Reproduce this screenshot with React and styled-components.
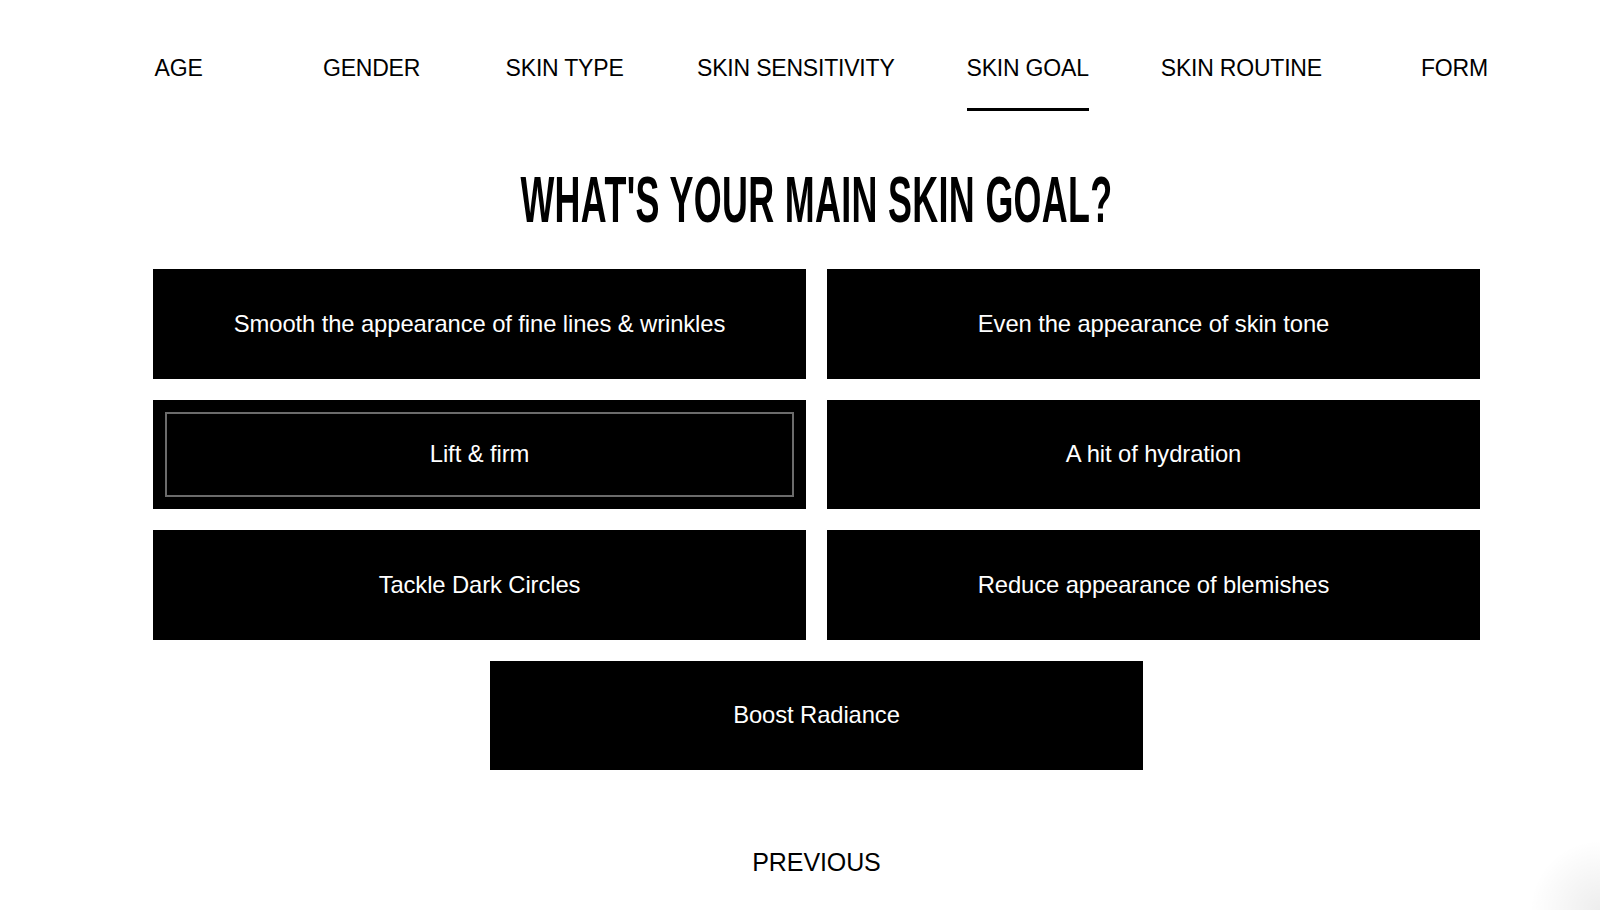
import React from "react";
import styled, { createGlobalStyle } from "styled-components";

const GlobalStyle = createGlobalStyle`
  * { box-sizing: border-box; }
  html, body {
    margin: 0;
    padding: 0;
    background: #fff;
    color: #000;
    font-family: "Liberation Sans", Arial, sans-serif;
  }
  body {
    min-height: 910px;
    background:
      radial-gradient(circle at 100% 100%, rgba(0,0,0,0.07), rgba(0,0,0,0) 70px),
      #fff;
    background-repeat: no-repeat;
  }
`;

const Page = styled.div`
  padding-left: 33px;
  padding-top: 56px;
  min-height: 910px;
`;

const Nav = styled.nav`
  display: flex;
  justify-content: center;
`;

const Tab = styled.div`
  min-width: 193px;
  padding: 0 36px;
  display: flex;
  justify-content: center;
`;

const TabLabel = styled.span`
  display: block;
  font-size: 23px;
  line-height: 24px;
  letter-spacing: -0.2px;
  padding-bottom: 28px;
  border-bottom: 3px solid ${(p) => (p.$active ? "#000" : "transparent")};
  white-space: nowrap;
  cursor: pointer;
`;

const Main = styled.main`
  width: 1327px;
  margin: 0 auto;
`;

const Heading = styled.h1`
  margin: 56px 0 36px;
  font-family: "Liberation Sans", Arial, sans-serif;
  font-weight: 700;
  font-size: 65px;
  line-height: 66px;
  text-align: center;
  letter-spacing: 0.6px;
  transform: scaleX(0.552);
  white-space: nowrap;
`;

const Grid = styled.div`
  display: grid;
  grid-template-columns: 1fr 1fr;
  column-gap: 21px;
  row-gap: 21px;
`;

const Option = styled.button`
  height: 109.5px;
  background: #000;
  color: #fff;
  border: none;
  font-family: "Liberation Sans", Arial, sans-serif;
  font-size: 23.8px;
  letter-spacing: -0.1px;
  display: flex;
  align-items: center;
  justify-content: center;
  padding: 0 20px;
  cursor: pointer;
  outline: ${(p) => (p.$focused ? "2px solid #6b6b6b" : "none")};
  outline-offset: -14px;
  ${(p) =>
    p.$wide &&
    `
    grid-column: 1 / -1;
    justify-self: center;
    width: calc(50% - 10.5px);
  `}
`;

const Footer = styled.div`
  display: flex;
  justify-content: center;
  margin-top: 80px;
`;

const PrevButton = styled.button`
  background: none;
  border: none;
  padding: 0;
  font-family: "Liberation Sans", Arial, sans-serif;
  font-size: 25px;
  line-height: 25px;
  color: #000;
  letter-spacing: -0.1px;
  cursor: pointer;
`;

const tabs = [
  "AGE",
  "GENDER",
  "SKIN TYPE",
  "SKIN SENSITIVITY",
  "SKIN GOAL",
  "SKIN ROUTINE",
  "FORM",
];

const options = [
  "Smooth the appearance of fine lines & wrinkles",
  "Even the appearance of skin tone",
  "Lift & firm",
  "A hit of hydration",
  "Tackle Dark Circles",
  "Reduce appearance of blemishes",
];

export default function App() {
  return (
    <>
      <GlobalStyle />
      <Page>
        <Nav>
          {tabs.map((t) => (
            <Tab key={t}>
              <TabLabel $active={t === "SKIN GOAL"}>{t}</TabLabel>
            </Tab>
          ))}
        </Nav>
        <Main>
          <Heading>WHAT'S YOUR MAIN SKIN GOAL?</Heading>
          <Grid>
            {options.map((o) => (
              <Option key={o} $focused={o === "Lift & firm"}>
                {o}
              </Option>
            ))}
            <Option $wide>Boost Radiance</Option>
          </Grid>
          <Footer>
            <PrevButton>PREVIOUS</PrevButton>
          </Footer>
        </Main>
      </Page>
    </>
  );
}
